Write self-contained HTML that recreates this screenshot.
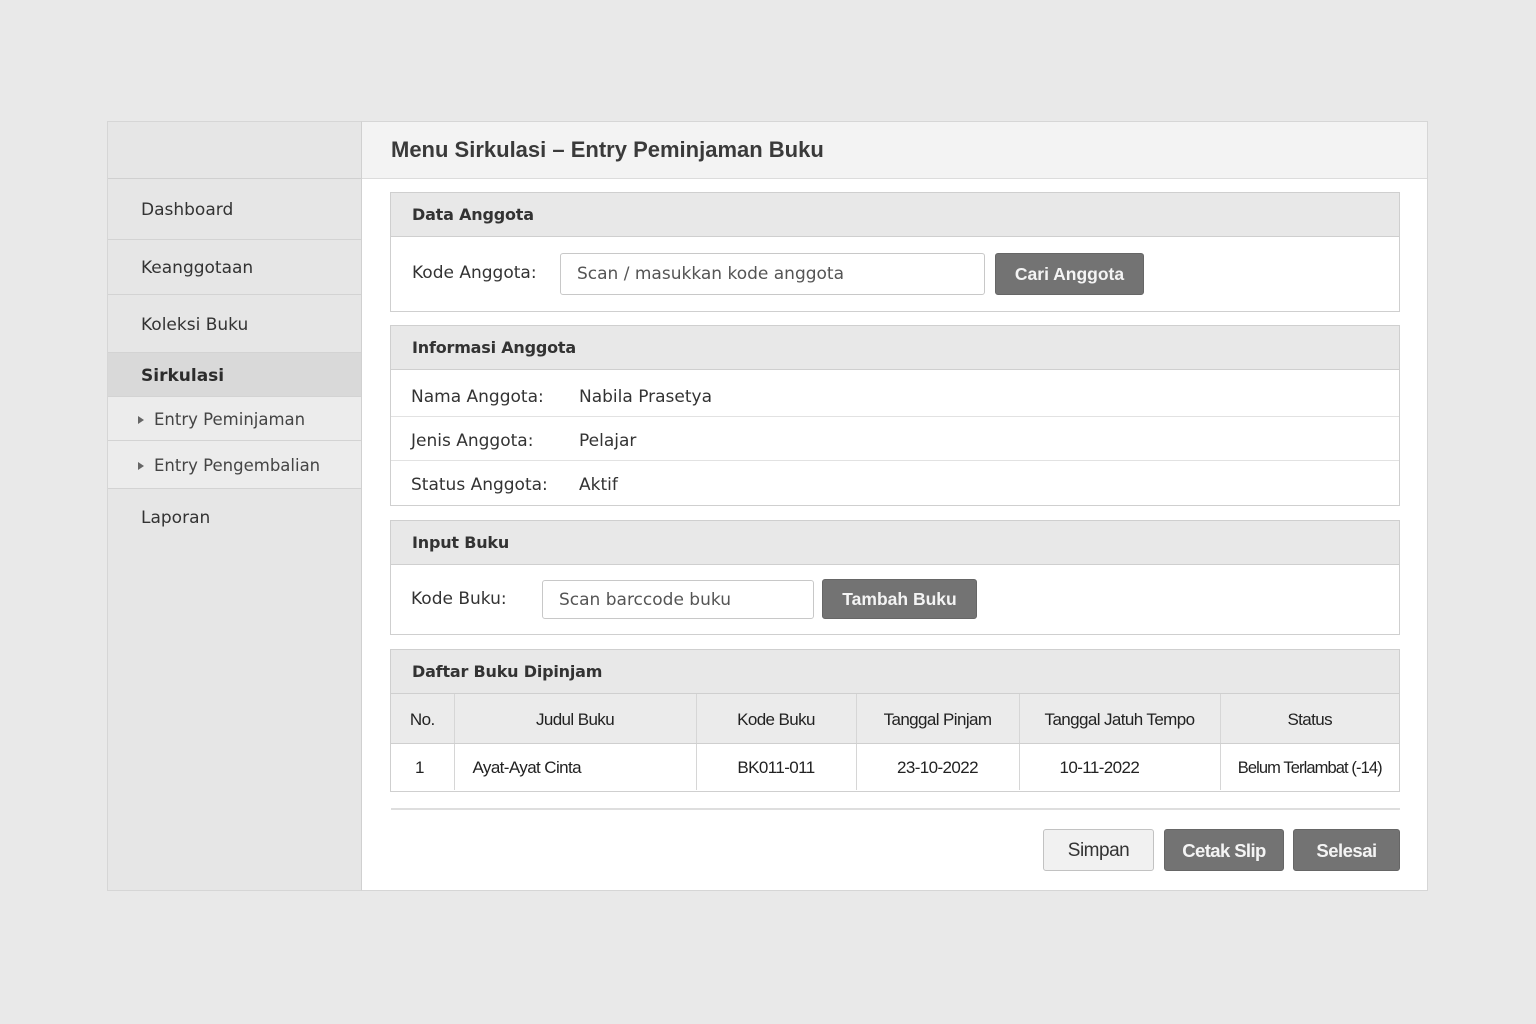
<!DOCTYPE html>
<html><head><meta charset="utf-8"><style>
*{margin:0;padding:0;box-sizing:border-box}
body{width:1536px;height:1024px;background:#e9e9e9;font-family:"DejaVu Sans","Liberation Sans",sans-serif;color:#333;position:relative;overflow:hidden}
.a{position:absolute}
.frame{left:107px;top:121px;width:1321px;height:770px;border:1px solid #d6d6d6;background:#fff}
.side{left:107px;top:121px;width:255px;height:770px;background:#e6e6e6;border:1px solid #d6d6d6;border-right:1px solid #d0d0d0}
.si{position:absolute;left:0;width:253px;border-bottom:1px solid #d3d3d3;font-size:17px;color:#333;padding-left:33px;padding-top:2px;display:flex;align-items:center}
.sub{padding-left:46px;font-size:16.5px;color:#444}
.sub:before{content:"";position:absolute;left:30px;border-left:6px solid #666;border-top:4px solid transparent;border-bottom:4px solid transparent}
.hdr{left:362px;top:122px;width:1065px;height:57px;background:#f3f3f3;border-bottom:1px solid #dcdcdc;font-family:"Liberation Sans",sans-serif;font-weight:bold;font-size:22px;color:#3a3a3a;padding:15px 0 0 29px}
.sec{position:absolute;left:390px;width:1010px;border:1px solid #cfcfcf;background:#fff}
.sh{height:44px;background:#e8e8e8;border-bottom:1px solid #cfcfcf;font-weight:bold;font-size:16px;color:#333;padding:12px 0 0 21px;letter-spacing:-0.2px}
.lbl{position:absolute;font-size:17px;color:#333}
.inp{position:absolute;border:1px solid #c8c8c8;border-radius:3px;background:#fff;font-size:17px;color:#555;padding-left:16px;display:flex;align-items:center}
.btn{position:absolute;background:#737373;border:1px solid #666;border-radius:3px;color:#f4f4f4;font-weight:bold;font-size:16px;display:flex;align-items:center;justify-content:center;font-family:"Liberation Sans",sans-serif;font-size:17.5px}
.row{position:absolute;left:0;width:1008px;height:44px;border-bottom:1px solid #e2e2e2}
table{position:absolute;left:0;top:44px;width:1008px;border-collapse:collapse;font-family:"Liberation Sans",sans-serif;font-size:17px;letter-spacing:-0.6px;color:#222}
td{border-right:1px solid #d6d6d6;text-align:center}
td:last-child{border-right:none}
thead td{height:49px;background:#ebebeb;border-bottom:1px solid #cfcfcf;padding-top:3px}
tbody td{height:47px;padding-top:3px}
</style></head><body>
<div class="a frame"></div>
<div class="a side">
<div class="si" style="top:0;height:57px;border-bottom:1px solid #d0d0d0"></div>
<div class="si" style="top:57px;height:61px">Dashboard</div>
<div class="si" style="top:118px;height:55px">Keanggotaan</div>
<div class="si" style="top:173px;height:58px">Koleksi Buku</div>
<div class="si" style="top:231px;height:44px;background:#d9d9d9;font-weight:bold;color:#2c2c2c">Sirkulasi</div>
<div class="si sub" style="top:275px;height:44px;background:#ececec">Entry Peminjaman</div>
<div class="si sub" style="top:319px;height:48px;background:#ececec">Entry Pengembalian</div>
<div class="si" style="top:367px;height:56px;border-bottom:none">Laporan</div>
</div>
<div class="a hdr">Menu Sirkulasi – Entry Peminjaman Buku</div>

<div class="sec" style="top:192px;height:120px">
<div class="sh">Data Anggota</div>
<div class="lbl" style="left:21px;top:70px">Kode Anggota:</div>
<div class="inp" style="left:169px;top:60px;width:425px;height:42px">Scan / masukkan kode anggota</div>
<div class="btn" style="left:604px;top:60px;width:149px;height:42px">Cari Anggota</div>
</div>

<div class="sec" style="top:325px;height:181px">
<div class="sh">Informasi Anggota</div>
<div class="row" style="top:44px;height:47px"><span class="lbl" style="left:20px;top:17px">Nama Anggota:</span><span class="lbl" style="left:188px;top:17px">Nabila Prasetya</span></div>
<div class="row" style="top:91px"><span class="lbl" style="left:20px;top:14px">Jenis Anggota:</span><span class="lbl" style="left:188px;top:14px">Pelajar</span></div>
<div class="row" style="top:135px;border-bottom:none"><span class="lbl" style="left:20px;top:14px">Status Anggota:</span><span class="lbl" style="left:188px;top:14px">Aktif</span></div>
</div>

<div class="sec" style="top:520px;height:115px">
<div class="sh">Input Buku</div>
<div class="lbl" style="left:20px;top:68px">Kode Buku:</div>
<div class="inp" style="left:151px;top:59px;width:272px;height:39px">Scan barccode buku</div>
<div class="btn" style="left:431px;top:58px;width:155px;height:40px">Tambah Buku</div>
</div>

<div class="sec" style="top:649px;height:143px">
<div class="sh">Daftar Buku Dipinjam</div>
<table>
<colgroup><col style="width:63px"><col style="width:242px"><col style="width:160px"><col style="width:163px"><col style="width:201px"><col></colgroup>
<thead><tr><td>No.</td><td>Judul Buku</td><td>Kode Buku</td><td>Tanggal Pinjam</td><td>Tanggal Jatuh Tempo</td><td>Status</td></tr></thead>
<tbody><tr><td style="text-align:left;padding-left:24px">1</td><td style="text-align:left;padding-left:18px">Ayat-Ayat Cinta</td><td>BK011-011</td><td>23-10-2022</td><td style="text-align:left;padding-left:40px">10-11-2022</td><td style="font-size:16.5px;letter-spacing:-0.9px">Belum Terlambat (-14)</td></tr></tbody>
</table>
</div>

<div class="a" style="left:391px;top:808px;width:1009px;height:2px;background:#dedede"></div>
<div class="btn" style="left:1043px;top:829px;width:111px;height:42px;background:#f1f1f1;color:#333;border:1px solid #c2c2c2;font-weight:normal;font-size:19px;letter-spacing:-0.5px;padding-top:2px">Simpan</div>
<div class="btn" style="left:1164px;top:829px;width:120px;height:42px;font-size:18.5px;letter-spacing:-0.6px;padding-top:2px">Cetak Slip</div>
<div class="btn" style="left:1293px;top:829px;width:107px;height:42px;font-size:18.5px;letter-spacing:-0.5px;padding-top:2px">Selesai</div>
</body></html>
